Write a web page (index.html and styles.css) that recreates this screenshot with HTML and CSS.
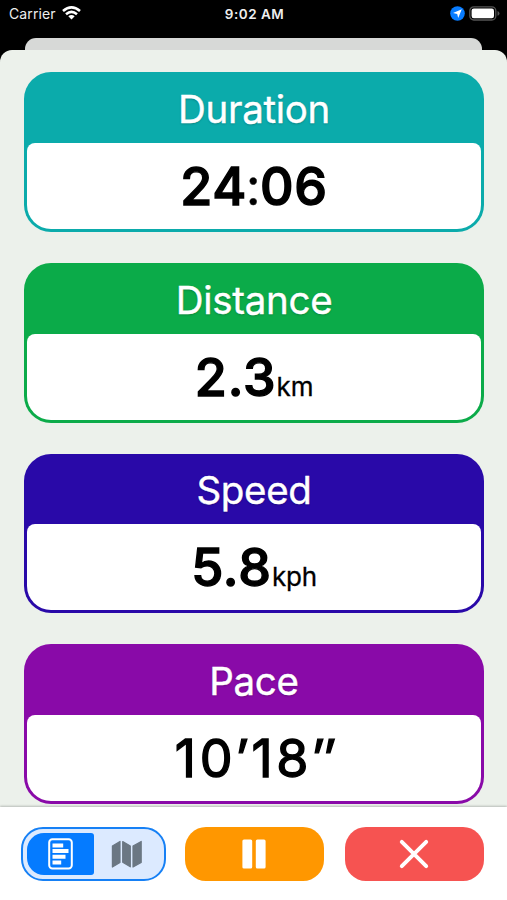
FILE: index.html
```html
<!DOCTYPE html>
<html lang="en">
<head>
<meta charset="utf-8">
<title>Workout</title>
<link rel="stylesheet" href="styles.css">
</head>
<body>
<div class="phone">
  <header class="status">
    <div class="carrier"><span>Carrier</span>
      <svg width="19" height="14" viewBox="0 0 19 14"><g fill="none" stroke="#fff" stroke-width="2.6"><path d="M1 5.1Q9.5-2.2 18 5.1"/><path d="M4 8.2Q9.5 3.6 15 8.2"/></g><path fill="#fff" d="M6.3 10.3Q9.5 7.8 12.7 10.3L9.5 13.6z"/></svg>
    </div>
    <div class="clock">9:02 AM</div>
    <div class="indicators">
      <svg width="15" height="15" viewBox="0 0 15 15"><circle cx="7.5" cy="7.5" r="7.3" fill="#087cff"/><path d="M11.8 3.2L8.2 12 7.2 8 3 7.1z" fill="#fff"/></svg>
      <svg width="31" height="15" viewBox="0 0 31 15"><rect x=".8" y=".8" width="26" height="13.2" rx="4" fill="none" stroke="#555" stroke-width="1.3"/><rect x="2.6" y="2.6" width="22.4" height="9.6" rx="2.2" fill="#fff"/><path d="M28.5 5q2 .6 2 2.4t-2 2.4z" fill="#555"/></svg>
    </div>
  </header>
  <div class="back-sheet"></div>
  <main class="sheet">
    <section class="card teal"><h2 class="title">Duration</h2><div class="body"><span class="value time">24<span class="colon">:</span>06</span></div></section>
    <section class="card green"><h2 class="title">Distance</h2><div class="body"><span class="value decimal">2.3</span><span class="unit">km</span></div></section>
    <section class="card blue"><h2 class="title">Speed</h2><div class="body"><span class="value decimal">5.8</span><span class="unit">kph</span></div></section>
    <section class="card purple"><h2 class="title">Pace</h2><div class="body"><span class="value pace">10<span class="prime">′</span>18<span class="prime double">″</span></span></div></section>
  </main>
  <footer class="toolbar">
    <div class="segments">
      <button class="segment active" aria-label="Data"><svg width="26" height="32" viewBox="0 0 26 32"><rect x="1.2" y="1.2" width="22.6" height="29.2" rx="3.2" fill="none" stroke="#fff" stroke-width="2"/><path fill="#fff" d="M4.5 5.4h10.7v4H4.5zM4.5 10.9h16v4.2h-16zM4.5 16.7h13v4.1h-13zM4.5 22.4h8.7v4H4.5z"/></svg></button>
      <button class="segment" aria-label="Map"><svg width="32" height="29" viewBox="0 0 32 29"><g fill="#6b7783" stroke="#6b7783" stroke-width="1.2" stroke-linejoin="round"><path d="M1.4 6L9 1.4v21L1.4 27z"/><path d="M11.7 1.6l7.6 4.5v20.7l-7.6-4.5z"/><path d="M22 6l8.2-4.6v21L22 27z"/></g></svg></button>
    </div>
    <button class="action pause" aria-label="Pause"><svg width="24" height="30" viewBox="0 0 24 30"><rect x=".4" y=".5" width="9.8" height="29" rx="1.6" fill="#fff"/><rect x="13.8" y=".5" width="9.8" height="29" rx="1.6" fill="#fff"/></svg></button>
    <button class="action stop" aria-label="Stop"><svg width="30" height="30" viewBox="0 0 30 30"><path d="M2.8 2.8l24.4 24.4M27.2 2.8L2.8 27.2" stroke="#fff" stroke-width="3.9" stroke-linecap="round"/></svg></button>
  </footer>
</div>
</body>
</html>
```
FILE: styles.css
```css
* { box-sizing: border-box; }
body { margin: 0; background: #000; font-family: Inter, "Liberation Sans", sans-serif; }
button { border: 0; padding: 0; background: none; display: flex; align-items: center; justify-content: center; }
svg { display: block; }
.phone { width: 507px; height: 900px; overflow: hidden; display: flex; flex-direction: column; background: #000; }
.status { height: 38px; flex: none; padding: 6px 7px 0 9px; display: grid; grid-template-columns: 1fr auto 1fr; align-items: start; color: #eee; }
.carrier { display: flex; gap: 6px; font-size: 14px; line-height: 16px; letter-spacing: .1px; }
.clock { font-size: 13.5px; line-height: 16px; font-weight: 600; letter-spacing: .5px; }
.indicators { display: flex; justify-content: flex-end; gap: 4px; }
.back-sheet { height: 12px; flex: none; margin: 0 25px; border-radius: 11px 11px 0 0; background: #d7d9d7; }
.sheet { flex: none; height: 757px; overflow: hidden; padding: 22.4px 23px 0 24px; display: flex; flex-direction: column; gap: 31px; background: #ecf1eb; border-radius: 12px 12px 0 0; }
.card { height: 159.6px; flex: none; padding: 0 3px 3px; border-radius: 27px; display: flex; flex-direction: column; }
.teal { background: #0babab; }
.green { background: #0bab49; }
.blue { background: #2909a8; }
.purple { background: #890aa8; }
.title { margin: 0; height: 70.6px; padding-top: 3px; flex: none; display: flex; align-items: center; justify-content: center; color: #fff; font-size: 38.5px; font-weight: 400; letter-spacing: -.3px; -webkit-text-stroke: .4px #fff; text-shadow: 0 1px 2px rgba(0, 0, 0, .25); }
.body { flex: 1; min-height: 0; background: #fff; border-radius: 8px 8px 24px 24px; display: flex; align-items: baseline; justify-content: center; color: #000; line-height: 87px; }
.value { height: 86px; font-size: 52px; font-weight: 500; -webkit-text-stroke: 1.4px #000; stroke-linejoin: round; }
.time { letter-spacing: .8px; }
.decimal { letter-spacing: .9px; }
.colon { font-weight: 400; -webkit-text-stroke-width: .4px; margin: 0 -1.5px; }
.unit { height: 86px; font-size: 26px; font-weight: 400; letter-spacing: -.2px; -webkit-text-stroke: .3px #000; }
.pace { font-weight: 400; letter-spacing: 3.7px; padding-left: 2px; }
.prime { display: inline-block; line-height: 1; transform: skewX(-5deg); }
.double { letter-spacing: 0; }
.toolbar { position: relative; flex: none; height: 93px; padding: 20px 23px 0 21px; display: flex; align-items: flex-start; background: #fff; box-shadow: 0 -1px 2px rgba(0, 0, 0, .22); }
.segments { width: 145px; height: 54px; padding: 4px; display: flex; border: 2.5px solid #1680f5; border-radius: 22px; background: #dceaff; }
.segment { flex: 1; height: 42px; }
.segment.active { flex: 0 0 67px; background: #057bff; border-radius: 17px 3px 3px 17px; }
.action { width: 139px; height: 54px; border-radius: 21px; }
.pause { margin-left: 18.5px; background: #ff9700; }
.stop { margin-left: 21.5px; padding-right: 1px; background: #f65351; }
```
